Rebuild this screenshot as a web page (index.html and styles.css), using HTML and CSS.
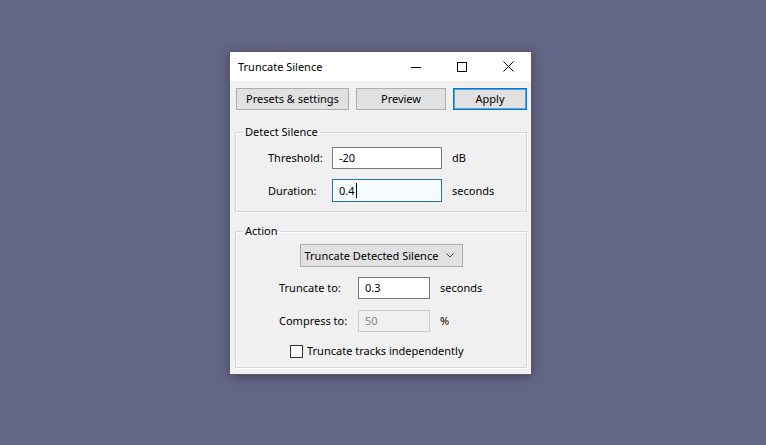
FILE: index.html
```html
<!DOCTYPE html>
<html lang="en">

<head>
    <meta charset="UTF-8">
    <title>Truncate Silence</title>
    <link rel="stylesheet" href="styles.css">
</head>

<body>
    <div class="window">
        <div class="titlebar">
            <span class="title">Truncate Silence</span>
            <div class="caption">
                <span class="cap-btn">
                    <svg width="10" height="10" viewBox="0 0 10 10"><path d="M0 5.5H10" stroke="#000" stroke-width="1"/></svg>
                </span>
                <span class="cap-btn">
                    <svg width="10" height="10" viewBox="0 0 10 10"><rect x="0.5" y="0.5" width="9" height="9" fill="none" stroke="#000" stroke-width="1"/></svg>
                </span>
                <span class="cap-btn">
                    <svg width="11" height="11" viewBox="0 0 11 11"><path d="M0.5 0.5L10.5 10.5M10.5 0.5L0.5 10.5" stroke="#000" stroke-width="1"/></svg>
                </span>
            </div>
        </div>
        <div class="content">
            <div class="buttons">
                <div class="btn btn-presets">Presets &amp; settings</div>
                <div class="btn btn-preview">Preview</div>
                <div class="btn btn-apply">Apply</div>
            </div>
            <fieldset class="group group-detect">
                <legend>Detect Silence</legend>
                <div class="rows rows-detect">
                    <span class="lbl">Threshold:</span>
                    <div class="field">-20</div>
                    <span class="unit">dB</span>
                    <span class="lbl">Duration:</span>
                    <div class="field focused">0.4<span class="caret"></span></div>
                    <span class="unit">seconds</span>
                </div>
            </fieldset>
            <fieldset class="group group-action">
                <legend>Action</legend>
                <div class="choice">
                    <span>Truncate Detected Silence</span>
                    <svg width="8" height="5" viewBox="0 0 8 5"><path d="M0.5 0.5L4 4L7.5 0.5" fill="none" stroke="#444" stroke-width="1"/></svg>
                </div>
                <div class="rows rows-action">
                    <span class="lbl">Truncate to:</span>
                    <div class="field">0.3</div>
                    <span class="unit">seconds</span>
                    <span class="lbl">Compress to:</span>
                    <div class="field disabled">50</div>
                    <span class="unit">%</span>
                </div>
                <div class="check">
                    <span class="box"></span>
                    <span>Truncate tracks independently</span>
                </div>
            </fieldset>
        </div>
    </div>
</body>

</html>
```

FILE: styles.css
```css
* {
    margin: 0;
    padding: 0;
    box-sizing: border-box;
}

body {
    background-color: #646687;
    font: 11px/16px "Noto Sans", "Open Sans", sans-serif;
    color: #000;
    height: 445px;
    overflow: hidden;
}

.window {
    width: 303px;
    height: 324px;
    margin: 51px 0 0 229px;
    border: 1px solid #5a5a6a;
    background-color: #f0f0f0;
    box-shadow: 0 2px 10px rgba(0, 0, 0, 0.35);
    display: flex;
    flex-direction: column;
}

.titlebar {
    height: 29px;
    flex-shrink: 0;
    background-color: #fff;
    display: flex;
    align-items: center;
    justify-content: space-between;
}

.title {
    padding-left: 8px;
    padding-top: 1px;
}

.caption {
    display: flex;
    height: 100%;
}

.cap-btn {
    width: 46px;
    display: flex;
    align-items: center;
    justify-content: center;
}

.content {
    flex: 1;
    padding: 7px 4px 0 5px;
}

.buttons {
    display: flex;
    justify-content: space-between;
    padding-left: 1px;
}

.btn {
    height: 22px;
    line-height: 20px;
    text-align: center;
    background-color: #e1e1e1;
    border: 1px solid #adadad;
}

.btn-presets {
    width: 113px;
}

.btn-preview {
    width: 90px;
}

.btn-apply {
    width: 74px;
    border-color: #0078d7;
    box-shadow: inset 0 0 0 1px #5aa0dc;
}

.group {
    border: 1px solid #d5d5d5;
    box-shadow: 1px 1px 0 #fff, inset 1px 1px 0 #fff;
    min-width: 0;
}

.group legend {
    margin-left: 7px;
    padding: 0 2px;
    line-height: 16px;
}

.group-detect {
    margin-top: 14px;
    padding: 7px 0 9px 0;
}

.group-action {
    margin-top: 11px;
    padding: 5px 0 8px 0;
}

.rows {
    display: grid;
    align-items: center;
    row-gap: 10px;
}

.rows-detect {
    grid-template-columns: 54px 110px auto;
    column-gap: 10px;
    padding-left: 32px;
}

.rows-action {
    grid-template-columns: 69px 72px auto;
    column-gap: 10px;
    row-gap: 11px;
    margin-top: 10px;
    padding-left: 43px;
}

.lbl {
    white-space: nowrap;
}

.field {
    height: 22px;
    line-height: 20px;
    padding-left: 6px;
    background-color: #fff;
    border: 1px solid #7a7a7a;
    display: flex;
    align-items: center;
}

.field.focused {
    border-color: #2a6fa0;
    background-color: #f5fcff;
    height: 23px;
}

.caret {
    width: 1px;
    height: 15px;
    background-color: #000;
    margin-left: 1px;
}

.field.disabled {
    background-color: #f0f0f0;
    border-color: #cccccc;
    color: #838383;
}

.choice {
    width: 163px;
    height: 23px;
    margin: 0 auto;
    padding: 0 8px 0 4px;
    background-color: #e1e1e1;
    border: 1px solid #adadad;
    display: flex;
    align-items: center;
    justify-content: space-between;
    white-space: nowrap;
}

.check {
    display: flex;
    align-items: center;
    margin-top: 11px;
    padding-left: 54px;
}

.check .box {
    width: 13px;
    height: 13px;
    border: 1px solid #333;
    background-color: #fff;
    margin-right: 4px;
}
```
